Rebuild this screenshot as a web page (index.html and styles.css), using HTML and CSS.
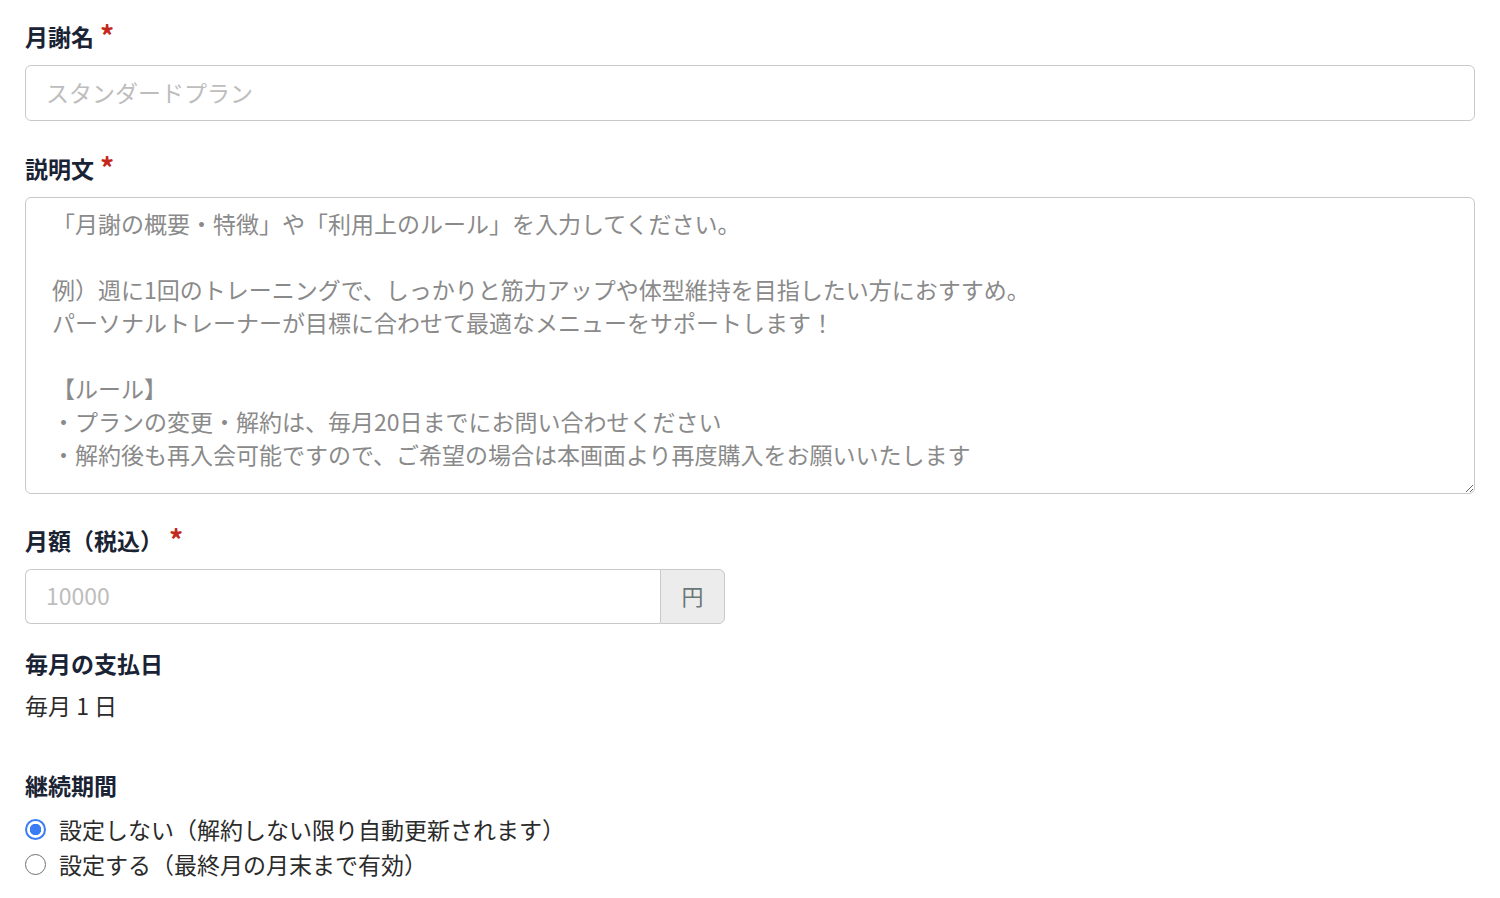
FILE: index.html
```html
<!DOCTYPE html>
<html lang="ja">
<head>
<meta charset="utf-8">
<title>月謝フォーム</title>
<link rel="stylesheet" href="styles.css">
</head>
<body>
<form class="form">
  <div class="field">
    <label class="label">月謝名<span class="req">*</span></label>
    <input class="input" type="text" placeholder="スタンダードプラン">
  </div>
  <div class="field">
    <label class="label">説明文<span class="req">*</span></label>
    <textarea class="textarea" placeholder="「月謝の概要・特徴」や「利用上のルール」を入力してください。

例）週に1回のトレーニングで、しっかりと筋力アップや体型維持を目指したい方におすすめ。
パーソナルトレーナーが目標に合わせて最適なメニューをサポートします！

【ルール】
・プランの変更・解約は、毎月20日までにお問い合わせください
・解約後も再入会可能ですので、ご希望の場合は本画面より再度購入をお願いいたします"></textarea>
  </div>
  <div class="field field-group">
    <label class="label">月額（税込）<span class="req req-wide">*</span></label>
    <div class="group">
      <input class="input group-input" type="text" placeholder="10000">
      <span class="addon">円</span>
    </div>
  </div>
  <div class="field field-tight">
    <label class="label">毎月の支払日</label>
    <p class="value">毎月 1 日</p>
  </div>
  <div class="field field-last">
    <label class="label">継続期間</label>
    <div class="radios">
      <label class="radio"><input type="radio" name="term" checked><span class="dot"></span>設定しない（解約しない限り自動更新されます）</label>
      <label class="radio"><input type="radio" name="term"><span class="dot"></span>設定する（最終月の月末まで有効）</label>
    </div>
  </div>
</form>
</body>
</html>
```

FILE: styles.css
```css
* { box-sizing: border-box; }
html, body { margin: 0; padding: 0; background: #fff; }
body {
  font-family: "Noto Sans CJK JP", "Noto Sans", sans-serif;
  font-size: 23px;
  line-height: 1.5;
  color: #333;
}
.form {
  padding: 19px 25px 0 25px;
  display: flex;
  flex-direction: column;
}
.field { display: flex; flex-direction: column; margin-bottom: 30px; }
.field:nth-child(2) { margin-bottom: 29px; }
.field-group { margin-bottom: 22px; }
.label {
  display: block;
  font-weight: 700;
  color: #1a2334;
  height: 34px;
  line-height: 34px;
  margin-bottom: 12px;
  font-size: 23px;
}
.req {
  color: #c4281c;
  margin-left: 6px;
  font-size: 28px;
  font-weight: 700;
  position: relative;
  top: 1px;
  line-height: 1;
}
.req-wide { margin-left: 6px; }
.input {
  width: 100%;
  height: 56px;
  border: 1.5px solid #c9c9c9;
  border-radius: 6px;
  padding: 0 20px 3px 20px;
  font-family: inherit;
  font-size: 23px;
  color: #333;
  background: #fff;
  outline: none;
}
.input::placeholder { color: #bdbdbd; }
.textarea {
  width: 100%;
  height: 297px;
  border: 1.5px solid #c9c9c9;
  border-radius: 6px;
  padding: 9px 26px;
  font-family: inherit;
  font-size: 23px;
  line-height: 33px;
  color: #333;
  resize: vertical;
  outline: none;
}
.textarea::placeholder { color: #8a8a8a; }
.group {
  display: flex;
  width: 700px;
  height: 55px;
}
.group-input {
  flex: 1;
  height: 55px;
  border-radius: 6px 0 0 6px;
  border-right: none;
}
.addon {
  width: 65px;
  display: flex;
  align-items: center;
  justify-content: center;
  background: #ececec;
  border: 1.5px solid #c9c9c9;
  border-radius: 0 6px 6px 0;
  color: #6a7776;
  font-size: 22px;
  padding-bottom: 2px;
}
.field-tight { margin-bottom: 0; }
.field-tight .label { margin-bottom: 8px; }
.value { margin: 0; height: 34px; line-height: 34px; color: #2b2b2b; }
.field-last { margin-top: 46px; }
.field-last .label { margin-bottom: 10px; }
.radios { display: flex; flex-direction: column; }
.radio {
  display: flex;
  align-items: center;
  height: 35px;
  color: #2b2b2b;
}
.radio input { display: none; }
.dot {
  width: 21px;
  height: 21px;
  border-radius: 50%;
  border: 1.5px solid #707070;
  margin-right: 13px;
  flex: none;
  background: #fff;
}
.radio input:checked + .dot {
  border: 2.5px solid #3a7cf5;
  background: radial-gradient(circle, #3a7cf5 0 5.5px, #fff 6px);
}
```
